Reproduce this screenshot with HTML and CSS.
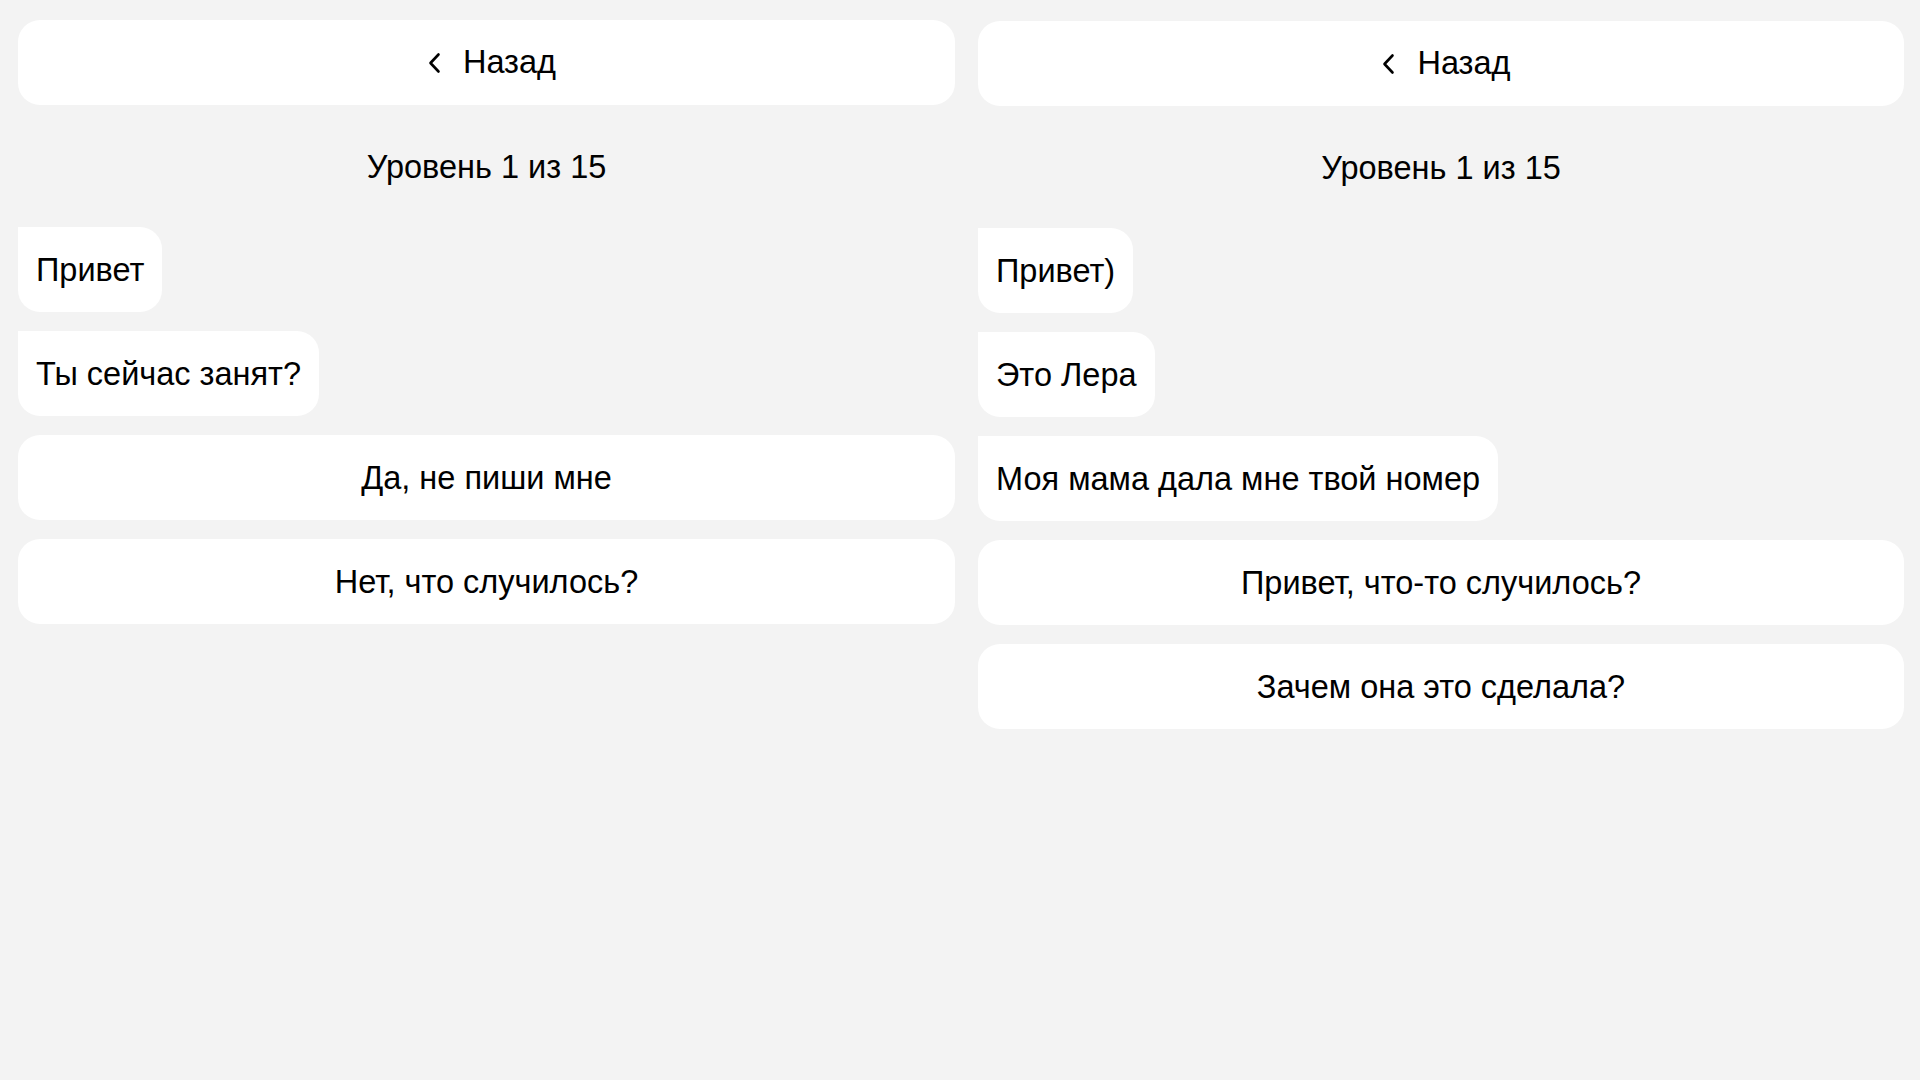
FILE: index.html
```html
<!DOCTYPE html>
<html lang="ru">
<head>
  <meta charset="UTF-8">
  <meta name="viewport" content="width=device-width, initial-scale=1.0">
  <title>Уровень 1 из 15</title>
  <link rel="stylesheet" href="styles.css">
</head>
<body>
  <div class="screens">
    <!-- Left screen -->
    <div class="screen">
      <button class="back-btn">
        <svg class="back-icon" width="24" height="24" viewBox="0 0 24 24"><path d="M21.5 3.5 L13.5 12 L21.5 20.5" fill="none" stroke="#000" stroke-width="2.6" stroke-linecap="round" stroke-linejoin="round"/></svg>
        <span>Назад</span>
      </button>
      <div class="level">Уровень 1 из 15</div>
      <div class="msg">Привет</div>
      <div class="msg">Ты сейчас занят?</div>
      <button class="answer">Да, не пиши мне</button>
      <button class="answer">Нет, что случилось?</button>
    </div>

    <!-- Right screen -->
    <div class="screen screen-right">
      <button class="back-btn">
        <svg class="back-icon" width="24" height="24" viewBox="0 0 24 24"><path d="M21.5 3.5 L13.5 12 L21.5 20.5" fill="none" stroke="#000" stroke-width="2.6" stroke-linecap="round" stroke-linejoin="round"/></svg>
        <span>Назад</span>
      </button>
      <div class="level">Уровень 1 из 15</div>
      <div class="msg">Привет)</div>
      <div class="msg">Это Лера</div>
      <div class="msg">Моя мама дала мне твой номер</div>
      <button class="answer">Привет, что-то случилось?</button>
      <button class="answer">Зачем она это сделала?</button>
    </div>
  </div>
</body>
</html>
```

FILE: styles.css
```css
body {
  margin: 0;
  padding: 0;
  background-color: #f3f3f3;
  font-family: "Liberation Sans", Arial, sans-serif;
  color: #000;
}
.screens {
  display: grid;
  grid-template-columns: 937px 926px;
  column-gap: 23px;
  padding: 20px 16px 0 18px;
  height: 1080px;
  box-sizing: border-box;
}
.screen {
  display: flex;
  flex-direction: column;
  align-items: flex-start;
  gap: 19px;
}
.screen-right {
  padding-top: 1px;
}
.back-btn,
.answer {
  width: 100%;
  border: none;
  background: #fff;
  border-radius: 22px;
  font-family: inherit;
  font-size: 32.5px;
  line-height: 37px;
  padding: 24px 19px;
  color: #000;
  text-align: center;
  cursor: pointer;
}
.answer {
  padding: 25px 19px 23px;
}
.back-btn {
  display: flex;
  justify-content: center;
  align-items: center;
  gap: 22px;
}
.back-icon {
  display: block;
}
.level {
  align-self: stretch;
  height: 84px;
  box-sizing: border-box;
  padding-top: 2px;
  display: flex;
  align-items: center;
  justify-content: center;
  font-size: 32.5px;
}
.msg {
  background: #fff;
  font-size: 32.5px;
  line-height: 37px;
  padding: 25px 18px 23px 18px;
  border-radius: 0 22px 22px 22px;
}
```
